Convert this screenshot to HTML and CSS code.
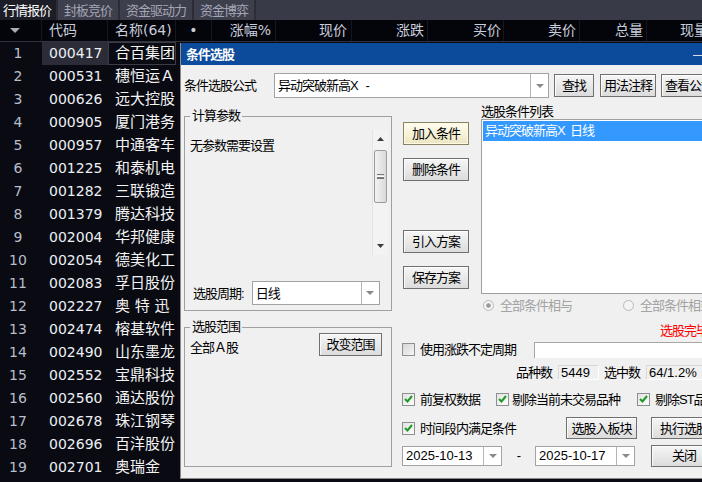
FILE: index.html
```html
<!DOCTYPE html>
<html lang="zh-CN">
<head>
    <meta charset="UTF-8">
    <title>行情报价 - 条件选股</title>
    <link rel="stylesheet" href="styles.css">
</head>
<body>
<div class="screen">
    <div class="tabs">
        <div class="tab active">行情报价</div>
        <div class="tab">封板竞价</div>
        <div class="tab">资金驱动力</div>
        <div class="tab">资金博弈</div>
    </div>

    <div class="grid-head">
        <div class="c-num"><svg width="10" height="6" viewBox="0 0 10 6"><polygon points="0,0 10,0 5,5" fill="#a9adb8"/></svg></div>
        <div class="c-code">代码</div>
        <div class="c-name">名称(64)</div>
        <div class="c-dot">•</div>
        <div class="c-pct">涨幅%</div>
        <div class="c-price">现价</div>
        <div class="c-chg">涨跌</div>
        <div class="c-bid">买价</div>
        <div class="c-ask">卖价</div>
        <div class="c-vol">总量</div>
        <div class="c-cur">现量</div>
    </div>

    <div class="rows">
        <div class="row sel"><div class="c-num">1</div><div class="c-code">000417</div><div class="c-name">合百集团</div></div>
        <div class="row"><div class="c-num">2</div><div class="c-code">000531</div><div class="c-name">穗恒运Ａ</div></div>
        <div class="row"><div class="c-num">3</div><div class="c-code">000626</div><div class="c-name">远大控股</div></div>
        <div class="row"><div class="c-num">4</div><div class="c-code">000905</div><div class="c-name">厦门港务</div></div>
        <div class="row"><div class="c-num">5</div><div class="c-code">000957</div><div class="c-name">中通客车</div></div>
        <div class="row"><div class="c-num">6</div><div class="c-code">001225</div><div class="c-name">和泰机电</div></div>
        <div class="row"><div class="c-num">7</div><div class="c-code">001282</div><div class="c-name">三联锻造</div></div>
        <div class="row"><div class="c-num">8</div><div class="c-code">001379</div><div class="c-name">腾达科技</div></div>
        <div class="row"><div class="c-num">9</div><div class="c-code">002004</div><div class="c-name">华邦健康</div></div>
        <div class="row"><div class="c-num">10</div><div class="c-code">002054</div><div class="c-name">德美化工</div></div>
        <div class="row"><div class="c-num">11</div><div class="c-code">002083</div><div class="c-name">孚日股份</div></div>
        <div class="row"><div class="c-num">12</div><div class="c-code">002227</div><div class="c-name">奥 特 迅</div></div>
        <div class="row"><div class="c-num">13</div><div class="c-code">002474</div><div class="c-name">榕基软件</div></div>
        <div class="row"><div class="c-num">14</div><div class="c-code">002490</div><div class="c-name">山东墨龙</div></div>
        <div class="row"><div class="c-num">15</div><div class="c-code">002552</div><div class="c-name">宝鼎科技</div></div>
        <div class="row"><div class="c-num">16</div><div class="c-code">002560</div><div class="c-name">通达股份</div></div>
        <div class="row"><div class="c-num">17</div><div class="c-code">002678</div><div class="c-name">珠江钢琴</div></div>
        <div class="row"><div class="c-num">18</div><div class="c-code">002696</div><div class="c-name">百洋股份</div></div>
        <div class="row"><div class="c-num">19</div><div class="c-code">002701</div><div class="c-name">奥瑞金</div></div>
    </div>

    <!-- 条件选股 dialog, floats over the quote list -->
    <div class="dialog">
        <div class="dlg-title"><span>条件选股</span><i class="dlg-min"></i></div>
        <div class="dlg-body">
            <div class="formula-row">
                <span class="formula-label">条件选股公式</span>
                <div class="combo formula-combo">
                    <span class="combo-text">异动突破新高X&nbsp;&nbsp;&nbsp;-</span>
                    <span class="combo-btn"><i class="arrow"></i></span>
                </div>
                <button class="btn btn-find">查找</button>
                <button class="btn btn-usage">用法注释</button>
                <button class="btn btn-view">查看公式</button>
            </div>

            <div class="main">
                <div class="left-col">
                    <fieldset class="group group-params">
                        <legend>计算参数</legend>
                        <div class="params">
                            <p class="params-text">无参数需要设置</p>
                            <div class="vscroll">
                                <div class="vs-arrow"><svg width="7" height="4" viewBox="0 0 7 4"><polygon points="0,4 7,4 3.5,0" fill="#3c3c3c"/></svg></div>
                                <div class="vs-thumb"><span class="grip"></span></div>
                                <div class="vs-track"></div>
                                <div class="vs-arrow"><svg width="7" height="4" viewBox="0 0 7 4"><polygon points="0,0 7,0 3.5,4" fill="#3c3c3c"/></svg></div>
                            </div>
                        </div>
                        <div class="period-row">
                            <span>选股周期:</span>
                            <div class="combo period-combo">
                                <span class="combo-text">日线</span>
                                <span class="combo-btn"><i class="arrow"></i></span>
                            </div>
                        </div>
                    </fieldset>

                    <fieldset class="group group-range">
                        <legend>选股范围</legend>
                        <div class="range-row">
                            <span class="range-text">全部Ａ股</span>
                            <button class="btn btn-range">改变范围</button>
                        </div>
                    </fieldset>
                </div>

                <div class="right-col">
                    <div class="cond-area">
                        <div class="cond-buttons">
                            <button class="btn btn-default">加入条件</button>
                            <button class="btn btn-del">删除条件</button>
                            <button class="btn btn-import">引入方案</button>
                            <button class="btn btn-save">保存方案</button>
                        </div>
                        <div class="cond-list-col">
                            <div class="list-label">选股条件列表</div>
                            <div class="cond-list">
                                <div class="cond-item selected">异动突破新高X&nbsp;&nbsp;日线</div>
                            </div>
                            <div class="radio-row">
                                <label class="radio"><svg width="11" height="11" viewBox="0 0 11 11"><circle cx="5.5" cy="5.5" r="5" fill="#f4f4f4" stroke="#b9b9b9"/><circle cx="5.5" cy="5.5" r="2.3" fill="#9a9a9a"/></svg>全部条件相与</label>
                                <label class="radio radio-or"><svg width="11" height="11" viewBox="0 0 11 11"><circle cx="5.5" cy="5.5" r="5" fill="#f4f4f4" stroke="#b9b9b9"/></svg>全部条件相或</label>
                            </div>
                        </div>
                    </div>

                    <div class="options">
                        <div class="opt-row status-row"><span class="status">选股完毕</span></div>
                        <div class="opt-row period-opt">
                            <span class="check off"></span>
                            <span class="opt-text">使用涨跌不定周期</span>
                            <span class="edit period-edit"></span>
                        </div>
                        <div class="opt-row count-row">
                            <span>品种数</span>
                            <span class="readout total">5449</span>
                            <span class="count-label">选中数</span>
                            <span class="readout picked">64/1.2%</span>
                        </div>
                        <div class="opt-row flags-row">
                            <span class="flag flag-1"><span class="check"><svg width="9" height="8" viewBox="0 0 9 8"><polyline points="1,4 3.5,6.5 8,1" fill="none" stroke="#1d9a24" stroke-width="2"/></svg></span>前复权数据</span>
                            <span class="flag flag-2"><span class="check"><svg width="9" height="8" viewBox="0 0 9 8"><polyline points="1,4 3.5,6.5 8,1" fill="none" stroke="#1d9a24" stroke-width="2"/></svg></span>剔除当前未交易品种</span>
                            <span class="flag"><span class="check"><svg width="9" height="8" viewBox="0 0 9 8"><polyline points="1,4 3.5,6.5 8,1" fill="none" stroke="#1d9a24" stroke-width="2"/></svg></span>剔除ST品种</span>
                        </div>
                        <div class="opt-row action-row">
                            <span class="flag flag-time"><span class="check"><svg width="9" height="8" viewBox="0 0 9 8"><polyline points="1,4 3.5,6.5 8,1" fill="none" stroke="#1d9a24" stroke-width="2"/></svg></span>时间段内满足条件</span>
                            <button class="btn btn-block">选股入板块</button>
                            <button class="btn btn-run">执行选股</button>
                        </div>
                        <div class="opt-row date-row">
                            <div class="combo date-combo">
                                <span class="combo-text num">2025-10-13</span>
                                <span class="combo-btn"><i class="arrow"></i></span>
                            </div>
                            <span class="date-dash">-</span>
                            <div class="combo date-combo">
                                <span class="combo-text num">2025-10-17</span>
                                <span class="combo-btn"><i class="arrow"></i></span>
                            </div>
                            <button class="btn btn-close">关闭</button>
                        </div>
                    </div>
                </div>
            </div>
        </div>
    </div>
</div>
</body>
</html>
```

FILE: styles.css
```css
* {
    margin: 0;
    padding: 0;
    box-sizing: border-box;
}

body {
    background: #000;
    overflow: hidden;
}

.screen {
    position: relative;
    width: 702px;
    height: 482px;
    overflow: hidden;
    background: #090a12;
    font-family: "DejaVu Sans", "Noto Sans CJK SC", sans-serif;
}

/* top tabs */
.tabs {
    display: flex;
    height: 20px;
    background: #393a47;
    font-family: "Noto Sans CJK SC", sans-serif;
    font-size: 13px;
    letter-spacing: -1px;
    line-height: 20px;
    white-space: nowrap;
    overflow: hidden;
}

.tab {
    padding: 0 6px;
    color: #a3a6b6;
    background: #3e3f4c;
    border-right: 2px solid #2c2d37;
    flex-shrink: 0;
}

.tab.active {
    width: 58px;
    padding: 0 0 0 3px;
    color: #fff;
    background: #1c1d26;
}

/* quote list */
.grid-head {
    display: flex;
    height: 22px;
    background: #04040b;
    border-bottom: 1px solid #30323e;
    color: #c8cedb;
    font-size: 14px;
    line-height: 21px;
    white-space: nowrap;
}

.grid-head > div {
    border-right: 1px solid #15161f;
}

.c-num {
    width: 42px;
    padding-right: 6px;
    text-align: center;
    flex-shrink: 0;
}

.grid-head .c-num svg {
    margin-top: 8px;
    display: block;
    margin-left: 10px;
}

.c-code {
    width: 66px;
    padding-left: 7px;
    flex-shrink: 0;
}

.c-name {
    width: 68px;
    padding-left: 7px;
    flex-shrink: 0;
}

.c-dot {
    width: 36px;
    text-align: center;
    flex-shrink: 0;
}

.c-pct { width: 64px; text-align: right; padding-right: 4px; flex-shrink: 0; }
.c-price { width: 76px; text-align: right; padding-right: 4px; flex-shrink: 0; }
.c-chg { width: 76px; text-align: right; padding-right: 3px; flex-shrink: 0; }
.c-bid { width: 76px; text-align: right; padding-right: 2px; flex-shrink: 0; }
.c-ask { width: 76px; text-align: right; padding-right: 3px; flex-shrink: 0; }
.c-vol { width: 67px; text-align: right; padding-right: 3px; flex-shrink: 0; }
.c-cur { width: 60px; padding-left: 33px; flex-shrink: 0; }

.row {
    display: flex;
    height: 23px;
    line-height: 23px;
    white-space: nowrap;
}

.row .c-num {
    color: #b7bfcc;
    font-size: 14px;
}

.row .c-code {
    color: #eceff4;
    font-size: 14px;
}

.row .c-name {
    color: #f4f4f4;
    font-size: 15px;
}

.row.sel .c-code {
    background: #2b2c37;
}

.row.sel .c-name {
    border: 1px solid #3b3c48;
    line-height: 21px;
    padding-left: 6px;
}

/* dialog */
.dialog {
    position: absolute;
    left: 180px;
    top: 43px;
    width: 546px;
    height: 436px;
    background: #f0f0f0;
    border-left: 1px solid #8a8a8a;
    border-bottom: 1px solid #8a8a8a;
    font-family: "Liberation Sans", "Noto Sans CJK SC", sans-serif;
    font-size: 13px;
    letter-spacing: -1px;
    line-height: 15px;
    color: #000;
}

.dlg-title {
    display: flex;
    align-items: center;
    height: 22px;
    padding-left: 5px;
    background: #0c4b9b;
    color: #fff;
    font-weight: bold;
}

.dlg-min {
    margin-left: auto;
    margin-right: 23px;
    margin-top: 2px;
    width: 10px;
    height: 1px;
    background: #d8dce6;
}

.dlg-body {
    padding: 8px 0 0 3px;
}

.formula-row {
    display: flex;
    align-items: center;
    height: 25px;
}

.formula-label {
    width: 90px;
    flex-shrink: 0;
}

.combo {
    display: flex;
    background: #fff;
    border: 1px solid #a3a3a3;
    flex-shrink: 0;
}

.combo-text {
    flex: 1;
    padding-left: 3px;
    align-self: center;
    white-space: nowrap;
}

.combo-btn {
    width: 18px;
    border-left: 1px solid #b5b5b5;
    display: flex;
    align-items: center;
    justify-content: center;
}

.arrow {
    width: 0;
    height: 0;
    border-left: 4px solid transparent;
    border-right: 4px solid transparent;
    border-top: 4px solid #8a8a8a;
}

.formula-combo {
    width: 275px;
    height: 25px;
}

.btn {
    height: 23px;
    flex-shrink: 0;
    font: inherit;
    letter-spacing: -1px;
    color: #000;
    border: 1px solid #707070;
    background: linear-gradient(#f6f6f6, #e9e9e9 50%, #dcdcdc);
    box-shadow: inset 0 1px 0 #fff, inset 1px 0 0 #fbfbfb;
}

.btn-find { width: 40px; margin-left: 5px; }
.btn-usage { width: 56px; margin-left: 6px; }
.btn-view { width: 56px; margin-left: 5px; }

.main {
    display: flex;
    margin-top: 6px;
}

.left-col {
    width: 208px;
    padding-top: 5px;
    flex-shrink: 0;
}

.group {
    border: 1px solid #a0a0a0;
    min-width: 0;
}

.group legend {
    margin-left: 5px;
    padding: 0 2px;
    line-height: 14px;
}

.params {
    display: grid;
    grid-template-columns: 1fr 16px;
    padding: 7px 3px 0 5px;
}

.params-text {
    margin-top: 8px;
}

.vscroll {
    height: 125px;
    display: flex;
    flex-direction: column;
    background: #f3f3f3;
    border-left: 1px solid #e4e4e4;
}

.vs-arrow {
    height: 18px;
    display: flex;
    align-items: center;
    justify-content: center;
}

.vs-thumb {
    height: 53px;
    margin: 2px 1px 0;
    border: 1px solid #9b9b9b;
    border-radius: 2px;
    background: linear-gradient(90deg, #f2f2f2, #dadada);
    display: flex;
    align-items: center;
    justify-content: center;
}

.grip {
    width: 7px;
    height: 5px;
    border-top: 1px solid #777;
    border-bottom: 1px solid #777;
    background: linear-gradient(#fff 1px, #777 1px, #777 2px, transparent 2px) 0 1px no-repeat;
}

.vs-track {
    flex: 1;
}

.period-row {
    display: flex;
    align-items: center;
    margin-top: 26px;
    padding: 0 0 5px 8px;
}

.period-combo {
    width: 128px;
    height: 24px;
    margin-left: 8px;
}

.group-range {
    margin-top: 9px;
    height: 147px;
}

.range-row {
    display: flex;
    justify-content: space-between;
    align-items: flex-start;
    padding: 0 9px 0 5px;
}

.range-text {
    margin-top: 6px;
}

.btn-range {
    width: 63px;
    margin-top: -1px;
}

.right-col {
    margin-left: 10px;
    flex: 1;
    min-width: 0;
}

.cond-area {
    display: flex;
}

.cond-buttons {
    width: 67px;
    padding: 18px 0 0 1px;
    display: flex;
    flex-direction: column;
    flex-shrink: 0;
}

.cond-buttons .btn {
    width: 66px;
}

.btn-default {
    border-color: #8a8466;
    background: linear-gradient(#fffdf0, #f7f2d8 50%, #ece5c4);
    box-shadow: inset 0 0 0 1px #fffbe0;
}

.btn-del { margin-top: 13px; }
.btn-import { margin-top: 49px; }
.btn-save { margin-top: 13px; }

.cond-list-col {
    margin-left: 12px;
    flex: 1;
    margin-right: 8px;
}

.list-label {
    height: 15px;
}

.cond-list {
    height: 175px;
    background: #fff;
    border: 1px solid #a0a0a0;
    padding: 1px;
}

.cond-item {
    height: 20px;
    line-height: 20px;
    padding-left: 2px;
    white-space: nowrap;
}

.cond-item.selected {
    background: #3399ff;
    color: #fff;
}

.radio-row {
    display: flex;
    align-items: center;
    height: 16px;
    margin-top: 3px;
    padding-left: 2px;
    color: #a3a3a3;
}

.radio {
    display: flex;
    align-items: center;
    gap: 6px;
    white-space: nowrap;
}

.radio-or {
    margin-left: 51px;
}

.options {
    margin-top: 9px;
    white-space: nowrap;
}

.opt-row {
    display: flex;
    align-items: center;
}

.status-row {
    height: 16px;
    padding-left: 258px;
}

.status {
    color: #ff0000;
}

.period-opt {
    height: 15px;
    margin-top: 4px;
}

.check {
    width: 13px;
    height: 13px;
    border: 1px solid #8e8f8f;
    background: linear-gradient(135deg, #e3e3e3, #fdfdfd);
    display: inline-flex;
    align-items: center;
    justify-content: center;
    flex-shrink: 0;
    margin-right: 5px;
}

.check.off {
    background: linear-gradient(135deg, #d6d6d6, #f6f6f6);
}

.period-edit {
    margin-left: 18px;
    width: 190px;
    height: 16px;
    background: #fff;
    border: 1px solid #a6a6a6;
    border-bottom: none;
}

.count-row {
    height: 16px;
    margin-top: 7px;
    padding-left: 114px;
}

.readout {
    height: 15px;
    line-height: 14px;
    padding-left: 2px;
    border: 1px solid #d9d9d9;
    border-right-color: #fff;
    border-bottom-color: #fff;
    letter-spacing: 0;
}

.total {
    width: 41px;
    margin-left: 6px;
}

.count-label {
    margin-left: 5px;
}

.picked {
    width: 64px;
    margin-left: 6px;
}

.flags-row {
    height: 16px;
    margin-top: 11px;
}

.flag {
    display: flex;
    align-items: center;
}

.flag-1 { width: 94px; }
.flag-2 { width: 141px; }
.flag-2 .check { margin-right: 3px; }

.action-row {
    height: 22px;
    margin-top: 10px;
}

.flag-time {
    width: 164px;
}

.btn-block {
    width: 71px;
    height: 22px;
}

.btn-run {
    width: 66px;
    height: 22px;
    margin-left: 14px;
}

.date-row {
    height: 23px;
    margin-top: 5px;
}

.date-combo {
    width: 100px;
    height: 20px;
}

.combo-text.num {
    letter-spacing: 0;
    padding-left: 3px;
}

.date-dash {
    width: 33px;
    text-align: center;
}

.btn-close {
    width: 66px;
    height: 22px;
    margin-left: 16px;
}
```
